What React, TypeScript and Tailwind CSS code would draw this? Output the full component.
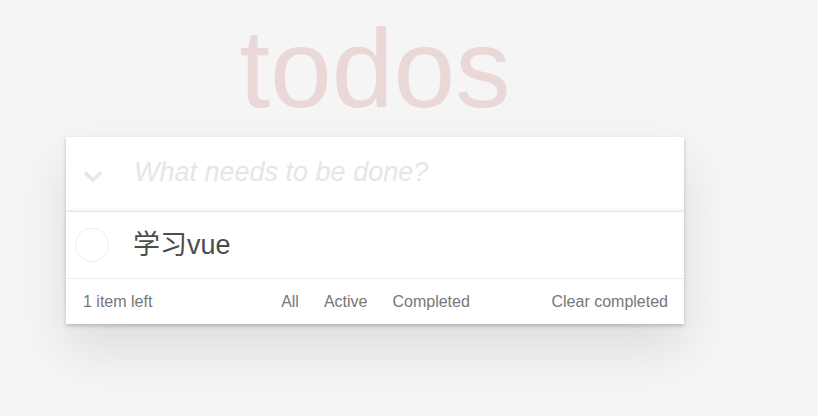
const App = () => {
  return (
    <div className="min-h-screen bg-[#f5f5f5] pt-[14px] font-['Liberation_Sans','Noto_Sans_CJK_SC',sans-serif]">
      <div className="ml-[66px] w-[618px]">
        <h1 className="mb-[13px] h-[110px] text-center text-[111px] leading-[110px] font-normal text-[rgba(175,47,47,0.15)]">
          todos
        </h1>

        <section className="bg-white shadow-[0_2px_4px_0_rgba(0,0,0,0.2),0_25px_50px_0_rgba(0,0,0,0.1)]">
          <header className="flex h-[75px] items-center border-b border-[#e6e6e6] pl-[17px] shadow-[inset_0_-2px_1px_rgba(0,0,0,0.03)]">
            <svg width="20" height="13" viewBox="0 0 20 13" className="mt-[4px] shrink-0">
              <polyline
                points="2,2.5 10,10 18,2.5"
                fill="none"
                stroke="#e6e6e6"
                strokeWidth="3.5"
              />
            </svg>
            <input
              className="mb-[3px] ml-[31px] w-full bg-transparent text-[27px] text-[#4d4d4d] outline-none placeholder:italic placeholder:text-[#e6e6e6]"
              placeholder="What needs to be done?"
            />
          </header>

          <ul>
            <li className="flex h-[67px] items-center border-b border-[#ededed] pl-[9px]">
              <span className="h-[34px] w-[34px] shrink-0 rounded-full border border-[#ededed]" />
              <label className="ml-[24px] text-[27px] text-[#4d4d4d]">学习vue</label>
            </li>
          </ul>

          <footer className="grid h-[45px] grid-cols-[1fr_auto_1fr] items-center pl-[17px] pr-[16px] text-[16px] text-[#777]">
            <span>1 item left</span>
            <div className="flex gap-[25px]">
              <a>All</a>
              <a>Active</a>
              <a>Completed</a>
            </div>
            <button className="justify-self-end">Clear completed</button>
          </footer>
        </section>
      </div>
    </div>
  );
};

export default App;
